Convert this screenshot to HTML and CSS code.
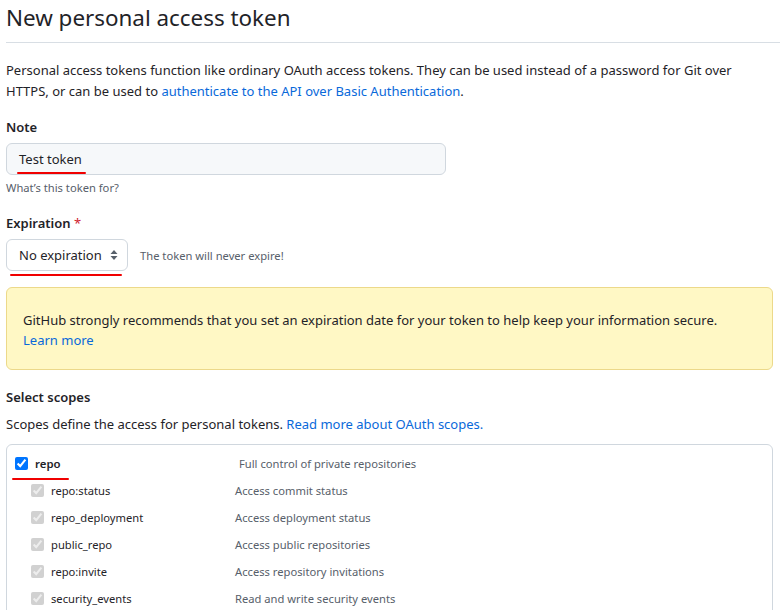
FILE: index.html
```html
<!DOCTYPE html>
<html lang="en">
<head>
<meta charset="utf-8">
<title>New personal access token</title>
<link rel="stylesheet" href="styles.css">
</head>
<body>
<main class="page">
  <h1 class="title">New personal access token</h1>
  <p class="intro">Personal access tokens function like ordinary OAuth access tokens. They can be used instead of a password for Git over HTTPS, or can be used to <a href="#">authenticate to the API over Basic Authentication</a>.</p>

  <div class="field">
    <label class="label">Note</label>
    <div class="input"><span class="marked">Test token<span class="mark mark-note"></span></span></div>
    <p class="note">What’s this token for?</p>
  </div>

  <div class="field field-exp">
    <label class="label">Expiration <span class="req">*</span></label>
    <div class="select-row">
      <div class="select-wrap">
        <div class="select">
          <span>No expiration</span>
          <svg class="caret" width="8" height="12" viewBox="0 0 8 12"><path d="M4 1 L7.5 5 H0.5 Z M4 11 L0.5 7 H7.5 Z" fill="#57606a"/></svg>
        </div>
        <span class="mark mark-select"></span>
      </div>
      <span class="hint">The token will never expire!</span>
    </div>
  </div>

  <div class="flash">
    <p>GitHub strongly recommends that you set an expiration date for your token to help keep your information secure.</p>
    <a href="#">Learn more</a>
  </div>

  <h2 class="label scopes-title">Select scopes</h2>
  <p class="scopes-desc">Scopes define the access for personal tokens. <a href="#">Read more about OAuth scopes.</a></p>

  <div class="scopes">
    <div class="row top">
      <label class="name"><input type="checkbox" checked><span class="marked">repo<span class="mark mark-repo"></span></span></label>
      <span class="desc lead">Full control of private repositories</span>
    </div>
    <div class="row sub">
      <label class="name"><input type="checkbox" checked disabled><span>repo:status</span></label>
      <span class="desc">Access commit status</span>
    </div>
    <div class="row sub">
      <label class="name"><input type="checkbox" checked disabled><span>repo_deployment</span></label>
      <span class="desc">Access deployment status</span>
    </div>
    <div class="row sub">
      <label class="name"><input type="checkbox" checked disabled><span>public_repo</span></label>
      <span class="desc">Access public repositories</span>
    </div>
    <div class="row sub">
      <label class="name"><input type="checkbox" checked disabled><span>repo:invite</span></label>
      <span class="desc">Access repository invitations</span>
    </div>
    <div class="row sub">
      <label class="name"><input type="checkbox" checked disabled><span>security_events</span></label>
      <span class="desc">Read and write security events</span>
    </div>
  </div>
</main>
</body>
</html>
```

FILE: styles.css
```css
html, body {
  margin: 0;
  padding: 0;
  background: #ffffff;
}

body {
  font-family: "Noto Sans", "Open Sans", sans-serif;
  font-size: 13px;
  line-height: 21px;
  color: #1f2328;
  overflow: hidden;
}

a {
  color: #0969da;
  text-decoration: none;
}

.page {
  padding: 0 7px 0 6px;
  width: 767px;
}

.title {
  margin: 0 -7px 0 0;
  font-size: 22.4px;
  font-weight: 400;
  line-height: 36px;
  padding-bottom: 6px;
  border-bottom: 1px solid #d8dee4;
}

.intro {
  margin: 17px 0 0;
}

.field {
  margin-top: 15px;
}

.field-exp {
  margin-top: 16px;
}

.label {
  display: block;
  margin: 0 0 5px;
  font-size: 13px;
  font-weight: 600;
  line-height: 21px;
}

.req {
  color: #cf222e;
  font-weight: 400;
}

.input {
  box-sizing: border-box;
  width: 440px;
  height: 32px;
  padding: 0 12px;
  display: flex;
  align-items: center;
  background: #f6f8fa;
  border: 1px solid #d0d7de;
  border-radius: 6px;
}

.marked {
  position: relative;
}

.mark {
  position: absolute;
  height: 2px;
  background: #f00000;
  border-radius: 1px;
}

.mark-note {
  left: -2px;
  right: -4px;
  bottom: -4px;
}

.note {
  margin: 4px 0 0;
  font-size: 11.2px;
  line-height: 18px;
  color: #57606a;
}

.select-row {
  display: flex;
  align-items: center;
  gap: 12px;
}

.select-wrap {
  position: relative;
}

.select {
  box-sizing: border-box;
  height: 32px;
  width: 122px;
  padding: 0 9px 0 12px;
  display: flex;
  align-items: center;
  justify-content: space-between;
  background: #ffffff;
  border: 1px solid #d0d7de;
  border-radius: 6px;
}

.mark-select {
  left: 4px;
  width: 112px;
  bottom: -5px;
}

.hint {
  font-size: 11.2px;
  color: #57606a;
}

.flash {
  margin-top: 16px;
  padding: 22px 16px 19px;
  background: #fff8c5;
  border: 1px solid #ecd98a;
  border-radius: 6px;
  line-height: 20px;
}

.flash p {
  margin: 0;
}

.scopes-title {
  margin-top: 17px;
}

.scopes-desc {
  margin: 6px 0 0;
}

.scopes {
  margin-top: 9px;
  padding: 5px 8px 0;
  border: 1px solid #d0d7de;
  border-radius: 6px;
  height: 200px;
}

.row {
  display: grid;
  grid-template-columns: 220px 1fr;
  align-items: center;
  height: 27px;
  font-size: 11.2px;
}

.name {
  display: flex;
  align-items: center;
  gap: 7px;
  font-size: 11.2px;
}

.row.sub .name {
  padding-left: 16px;
}

.row.top .name {
  font-weight: 600;
  font-size: 11.4px;
}

.name input {
  margin: 0;
  width: 13px;
  height: 13px;
}

.desc {
  color: #57606a;
}

.desc.lead {
  padding-left: 4px;
}

.mark-repo {
  left: -23px;
  right: -8px;
  bottom: -6px;
}
```
